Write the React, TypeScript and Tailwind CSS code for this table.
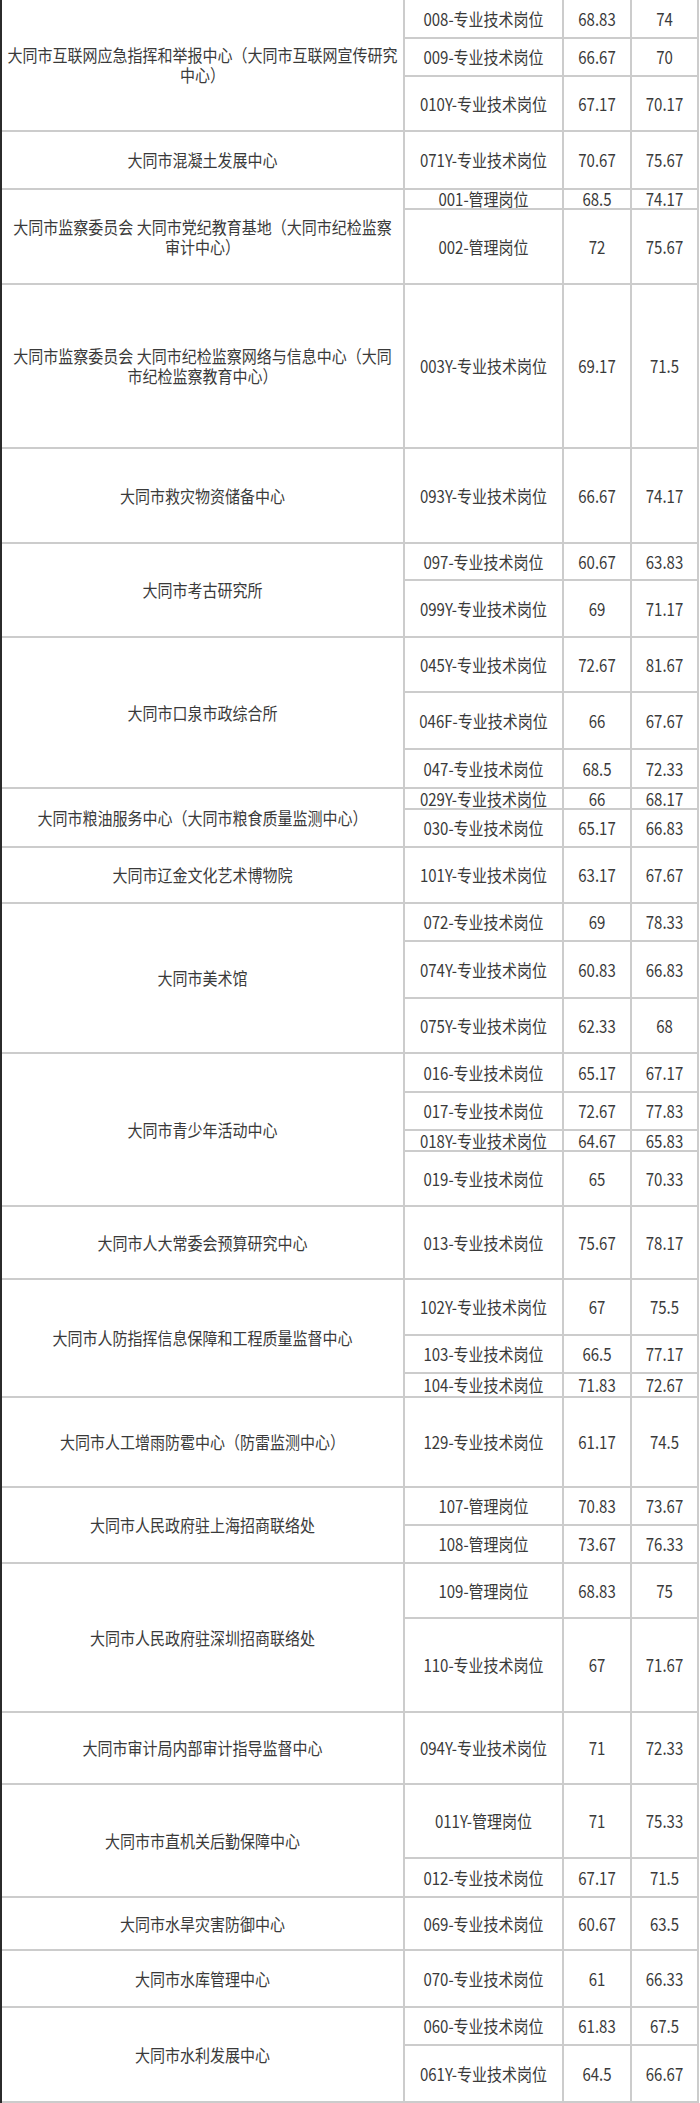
type Row = { code: string; a: string; b: string; h: string };
type Group = { name: string[]; rows: Row[] };

const groups: Group[] = [
  {
    name: ['大同市互联网应急指挥和举报中心（大同市互联网宣传研究', '中心）'],
    rows: [
      { code: '008-专业技术岗位', a: '68.83', b: '74', h: 'h-[39px]' },
      { code: '009-专业技术岗位', a: '66.67', b: '70', h: 'h-[38px]' },
      { code: '010Y-专业技术岗位', a: '67.17', b: '70.17', h: 'h-[55px]' },
    ],
  },
  {
    name: ['大同市混凝土发展中心'],
    rows: [{ code: '071Y-专业技术岗位', a: '70.67', b: '75.67', h: 'h-[58px]' }],
  },
  {
    name: ['大同市监察委员会 大同市党纪教育基地（大同市纪检监察', '审计中心）'],
    rows: [
      { code: '001-管理岗位', a: '68.5', b: '74.17', h: 'h-[20px]' },
      { code: '002-管理岗位', a: '72', b: '75.67', h: 'h-[75px]' },
    ],
  },
  {
    name: ['大同市监察委员会 大同市纪检监察网络与信息中心（大同', '市纪检监察教育中心）'],
    rows: [{ code: '003Y-专业技术岗位', a: '69.17', b: '71.5', h: 'h-[164px]' }],
  },
  {
    name: ['大同市救灾物资储备中心'],
    rows: [{ code: '093Y-专业技术岗位', a: '66.67', b: '74.17', h: 'h-[95px]' }],
  },
  {
    name: ['大同市考古研究所'],
    rows: [
      { code: '097-专业技术岗位', a: '60.67', b: '63.83', h: 'h-[37px]' },
      { code: '099Y-专业技术岗位', a: '69', b: '71.17', h: 'h-[57px]' },
    ],
  },
  {
    name: ['大同市口泉市政综合所'],
    rows: [
      { code: '045Y-专业技术岗位', a: '72.67', b: '81.67', h: 'h-[55px]' },
      { code: '046F-专业技术岗位', a: '66', b: '67.67', h: 'h-[57px]' },
      { code: '047-专业技术岗位', a: '68.5', b: '72.33', h: 'h-[39px]' },
    ],
  },
  {
    name: ['大同市粮油服务中心（大同市粮食质量监测中心）'],
    rows: [
      { code: '029Y-专业技术岗位', a: '66', b: '68.17', h: 'h-[21px]' },
      { code: '030-专业技术岗位', a: '65.17', b: '66.83', h: 'h-[38px]' },
    ],
  },
  {
    name: ['大同市辽金文化艺术博物院'],
    rows: [{ code: '101Y-专业技术岗位', a: '63.17', b: '67.67', h: 'h-[56px]' }],
  },
  {
    name: ['大同市美术馆'],
    rows: [
      { code: '072-专业技术岗位', a: '69', b: '78.33', h: 'h-[38px]' },
      { code: '074Y-专业技术岗位', a: '60.83', b: '66.83', h: 'h-[57px]' },
      { code: '075Y-专业技术岗位', a: '62.33', b: '68', h: 'h-[55px]' },
    ],
  },
  {
    name: ['大同市青少年活动中心'],
    rows: [
      { code: '016-专业技术岗位', a: '65.17', b: '67.17', h: 'h-[39px]' },
      { code: '017-专业技术岗位', a: '72.67', b: '77.83', h: 'h-[38px]' },
      { code: '018Y-专业技术岗位', a: '64.67', b: '65.83', h: 'h-[21px]' },
      { code: '019-专业技术岗位', a: '65', b: '70.33', h: 'h-[55px]' },
    ],
  },
  {
    name: ['大同市人大常委会预算研究中心'],
    rows: [{ code: '013-专业技术岗位', a: '75.67', b: '78.17', h: 'h-[73px]' }],
  },
  {
    name: ['大同市人防指挥信息保障和工程质量监督中心'],
    rows: [
      { code: '102Y-专业技术岗位', a: '67', b: '75.5', h: 'h-[56px]' },
      { code: '103-专业技术岗位', a: '66.5', b: '77.17', h: 'h-[38px]' },
      { code: '104-专业技术岗位', a: '71.83', b: '72.67', h: 'h-[24px]' },
    ],
  },
  {
    name: ['大同市人工增雨防雹中心（防雷监测中心）'],
    rows: [{ code: '129-专业技术岗位', a: '61.17', b: '74.5', h: 'h-[90px]' }],
  },
  {
    name: ['大同市人民政府驻上海招商联络处'],
    rows: [
      { code: '107-管理岗位', a: '70.83', b: '73.67', h: 'h-[38px]' },
      { code: '108-管理岗位', a: '73.67', b: '76.33', h: 'h-[38px]' },
    ],
  },
  {
    name: ['大同市人民政府驻深圳招商联络处'],
    rows: [
      { code: '109-管理岗位', a: '68.83', b: '75', h: 'h-[55px]' },
      { code: '110-专业技术岗位', a: '67', b: '71.67', h: 'h-[94px]' },
    ],
  },
  {
    name: ['大同市审计局内部审计指导监督中心'],
    rows: [{ code: '094Y-专业技术岗位', a: '71', b: '72.33', h: 'h-[72px]' }],
  },
  {
    name: ['大同市市直机关后勤保障中心'],
    rows: [
      { code: '011Y-管理岗位', a: '71', b: '75.33', h: 'h-[74px]' },
      { code: '012-专业技术岗位', a: '67.17', b: '71.5', h: 'h-[39px]' },
    ],
  },
  {
    name: ['大同市水旱灾害防御中心'],
    rows: [{ code: '069-专业技术岗位', a: '60.67', b: '63.5', h: 'h-[53px]' }],
  },
  {
    name: ['大同市水库管理中心'],
    rows: [{ code: '070-专业技术岗位', a: '61', b: '66.33', h: 'h-[57px]' }],
  },
  {
    name: ['大同市水利发展中心'],
    rows: [
      { code: '060-专业技术岗位', a: '61.83', b: '67.5', h: 'h-[38px]' },
      { code: '061Y-专业技术岗位', a: '64.5', b: '66.67', h: 'h-[57px]' },
    ],
  },
];

const cell = 'flex items-center justify-center border-l-2 border-b-2 border-[#cccccc] whitespace-nowrap';

export default function App() {
  return (
    <div className="w-[700px] bg-white">
      <div className="w-[699px] border-l-2 border-l-[#2b2b2b] border-r-2 border-r-[#cccccc] text-[15px] leading-[18px] text-[#3a3a3a] font-['Noto_Sans_CJK_SC','Noto_Sans',sans-serif]">
        {groups.map((g) => (
          <div key={g.rows[0].code} className="flex">
            <div className="w-[401px] shrink-0 flex items-center justify-center text-center border-b-2 border-[#cccccc] px-1">
              <span className="inline-block scale-y-115">
                {g.name.map((line, i) => (
                  <span key={i} className="block whitespace-nowrap">
                    {line}
                  </span>
                ))}
              </span>
            </div>
            <div className="flex flex-col">
              {g.rows.map((r) => (
                <div key={r.code} className={`flex ${r.h}`}>
                  <div className={`${cell} w-[159px]`}>
                    <span className="inline-block scale-y-115">{r.code}</span>
                  </div>
                  <div className={`${cell} w-[68px]`}>
                    <span className="inline-block scale-y-115">{r.a}</span>
                  </div>
                  <div className={`${cell} w-[67px]`}>
                    <span className="inline-block scale-y-115">{r.b}</span>
                  </div>
                </div>
              ))}
            </div>
          </div>
        ))}
      </div>
    </div>
  );
}
